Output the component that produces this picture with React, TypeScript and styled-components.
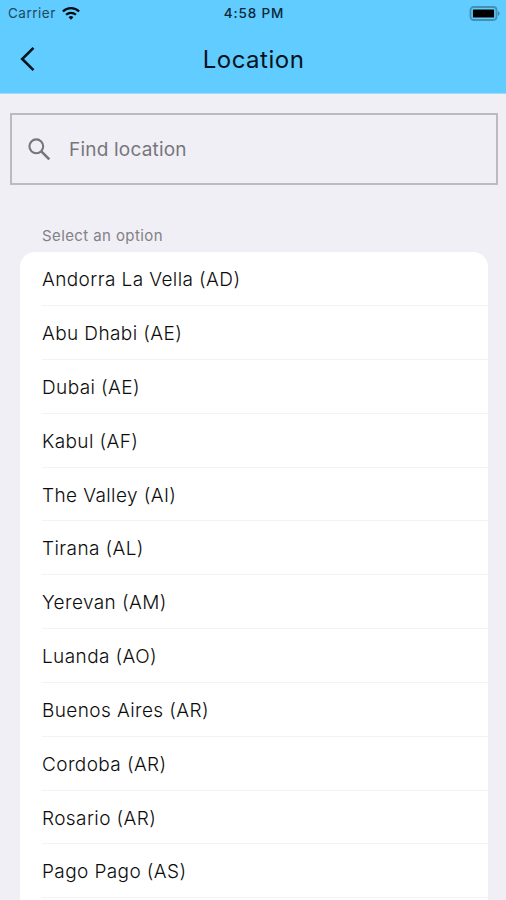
import React from 'react';
import styled, { createGlobalStyle } from 'styled-components';

const GlobalStyle = createGlobalStyle`
  *, *::before, *::after { box-sizing: border-box; }
  html, body { margin: 0; background: #f0eff5; }
  body { font-family: Inter, Roboto, sans-serif; overflow: hidden; }
`;

const Screen = styled.div`
  display: flex;
  flex-direction: column;
  height: 900px;
  overflow: hidden;
  background: #f0eff5;
`;

const Header = styled.header`
  flex: none;
  height: 94px;
  background: #61ccff;
  border-bottom: 1px solid #a0daf8;
`;

const StatusBar = styled.div`
  display: grid;
  grid-template-columns: 1fr auto 1fr;
  align-items: center;
  height: 26px;
  padding: 0 6px 0 8px;
  font-size: 13.5px;
  line-height: 26px;
  color: #0b2836;
`;

const Carrier = styled.div`
  display: flex;
  align-items: center;
  gap: 6px;
  letter-spacing: 0.5px;
  color: #1c4a60;
`;

const Clock = styled.div`
  padding-top: 1px;
  font-size: 13.5px;
  font-weight: 500;
  line-height: 25px;
  letter-spacing: 0.9px;
`;

const BatterySlot = styled.div`
  display: flex;
  justify-content: flex-end;
`;

const NavBar = styled.nav`
  display: grid;
  grid-template-columns: 60px 1fr 60px;
  align-items: center;
  height: 66px;
`;

const BackButton = styled.button`
  display: flex;
  padding: 0 0 0 19px;
  border: 0;
  background: none;
`;

const Title = styled.h1`
  margin: 0;
  padding: 2px 0 0 1px;
  text-align: center;
  font-size: 24px;
  font-weight: 400;
  line-height: 30px;
  letter-spacing: 0.5px;
  color: #06131a;
`;

const SearchField = styled.label`
  display: flex;
  flex: none;
  align-items: center;
  gap: 18px;
  height: 72px;
  margin: 19px 8px 0 10px;
  padding-left: 16px;
  border: 2px solid #bbbabf;
`;

const SearchInput = styled.input`
  flex: 1;
  min-width: 0;
  padding: 1px 0 0;
  border: 0;
  outline: 0;
  background: none;
  font: 400 19px/24px Inter, sans-serif;
  letter-spacing: 0.2px;
  &::placeholder { color: #77767b; opacity: 1; }
`;

const SectionLabel = styled.h2`
  flex: none;
  margin: 41px 0 6px 42px;
  font-size: 15px;
  font-weight: 400;
  line-height: 20px;
  letter-spacing: 0.4px;
  color: #828187;
`;

const OptionList = styled.ul`
  flex: none;
  margin: 0 18px 0 20px;
  padding: 0.4px 0 20px 22px;
  list-style: none;
  border-radius: 15px 15px 0 0;
  background: #fff;
`;

const Option = styled.li`
  height: 53.82px;
  padding-top: 1px;
  border-bottom: 1px solid #f3f3f4;
  font-size: 19px;
  font-weight: 300;
  line-height: 54px;
  letter-spacing: 0.4px;
  white-space: nowrap;
  color: #0c0c0c;
`;

const WifiIcon = () => (
  <svg width="18" height="13" viewBox="0 0 18 13" fill="none" stroke="#020c12" strokeWidth="2.3">
    <path d="M0.9 4.5a11.6 11.6 0 0 1 16.2 0" />
    <path d="M4.1 7.8a7 7 0 0 1 9.8 0" />
    <path d="M9 12.7L6.6 10.3a3.4 3.4 0 0 1 4.8 0Z" fill="#020c12" stroke="none" />
  </svg>
);

const BatteryIcon = () => (
  <svg width="31" height="15" viewBox="0 0 31 15">
    <rect x="1.5" y="1" width="26" height="13" rx="3.2" fill="#61ccff" stroke="#4291b3" strokeWidth="1.8" />
    <rect x="3.9" y="3.4" width="21.2" height="8.2" rx="0.6" fill="#000" />
    <path d="M29 5.2c1.3.5 1.6 1.4 1.6 2.3S30.3 9.3 29 9.8Z" fill="#43859f" />
  </svg>
);

const BackIcon = () => (
  <svg width="18" height="26" viewBox="0 0 18 26" fill="none" stroke="#03141c" strokeWidth="2.6">
    <path d="M14.5 1.9L3.2 13L14.5 24.1" />
  </svg>
);

const SearchIcon = () => (
  <svg width="23" height="23" viewBox="0 0 23 23" fill="none" stroke="#77767b" strokeWidth="2.1">
    <circle cx="8.3" cy="8.3" r="6.9" />
    <path d="M13.3 13.3L21.3 21.3" strokeWidth="2.6" />
  </svg>
);

const locations = [
  'Andorra La Vella (AD)',
  'Abu Dhabi (AE)',
  'Dubai (AE)',
  'Kabul (AF)',
  'The Valley (AI)',
  'Tirana (AL)',
  'Yerevan (AM)',
  'Luanda (AO)',
  'Buenos Aires (AR)',
  'Cordoba (AR)',
  'Rosario (AR)',
  'Pago Pago (AS)',
];

export default function App() {
  return (
    <Screen>
      <GlobalStyle />
      <Header>
        <StatusBar>
          <Carrier>
            Carrier
            <WifiIcon />
          </Carrier>
          <Clock>4:58 PM</Clock>
          <BatterySlot>
            <BatteryIcon />
          </BatterySlot>
        </StatusBar>
        <NavBar>
          <BackButton aria-label="Back">
            <BackIcon />
          </BackButton>
          <Title>Location</Title>
        </NavBar>
      </Header>
      <SearchField>
        <SearchIcon />
        <SearchInput placeholder="Find location" />
      </SearchField>
      <SectionLabel>Select an option</SectionLabel>
      <OptionList>
        {locations.map((name) => (
          <Option key={name}>{name}</Option>
        ))}
      </OptionList>
    </Screen>
  );
}
